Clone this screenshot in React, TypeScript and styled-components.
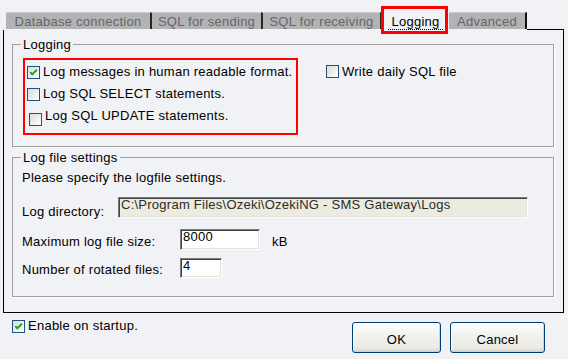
import React from 'react';
import styled, { createGlobalStyle } from 'styled-components';

const GlobalStyle = createGlobalStyle`
  html, body { margin: 0; padding: 0; background: #f1f2f6; }
  * { box-sizing: border-box; }
`;

const Window = styled.div`
  width: 568px;
  height: 359px;
  overflow: hidden;
  background: #f1f2f6;
  padding-top: 12px;
  display: flex;
  flex-direction: column;
  font-family: "Liberation Sans", Arial, sans-serif;
  font-size: 13px;
  line-height: 15px;
  letter-spacing: 0.25px;
  color: #000;
`;

const TabStrip = styled.div`
  display: flex;
  height: 18px;
  margin: 0 4px 0 3px;
  padding-left: 3px;
`;

const Tab = styled.div<{ $w: number; $sep?: boolean; $edge?: boolean; $active?: boolean }>`
  position: relative;
  flex: none;
  width: ${p => p.$w + (p.$sep ? 2 : 0) + (p.$edge ? 2 : 0)}px;
  height: 17px;
  padding-top: 1px;
  background: ${p => (p.$active ? '#f1f2f6' : '#b3b3b6')};
  border-top: 1px solid ${p => (p.$active ? '#f1f2f6' : '#cfcfd1')};
  border-left: ${p => (p.$sep ? '2px solid #262626' : '0')};
  border-right: ${p => (p.$edge ? '2px solid #111' : '0')};
  color: ${p => (p.$active ? '#000' : '#666669')};
  text-align: center;
  white-space: nowrap;
`;

const FocusLabel = styled.span`
  display: inline-block;
  height: 16px;
  padding: 0 3px;
  border-bottom: 1px dotted #000;
`;

const Annotation = styled.div<{ $w: number; $h: number; $x: number; $y: number; $t: number }>`
  position: absolute;
  left: ${p => p.$x}px;
  top: ${p => p.$y}px;
  width: ${p => p.$w}px;
  height: ${p => p.$h}px;
  border: ${p => p.$t}px solid #ff0000;
  pointer-events: none;
  z-index: 2;
`;

const TabFiller = styled.div`
  flex: 1;
  border-bottom: 1px solid #000;
`;

const Panel = styled.div`
  height: 283px;
  margin: 0 4px 0 3px;
  border: 1px solid #000;
  border-top: 0;
  padding: 7px 9px 0 8px;
  display: flex;
  flex-direction: column;
`;

const GroupBox = styled.fieldset<{ $top?: number; $bottom: number }>`
  margin: ${p => p.$top ?? 0}px 0 0 0;
  padding: 0 8px ${p => p.$bottom}px 8px;
  min-width: 0;
  border: 1px solid #a0a0a0;
  box-shadow: 1px 1px 0 #ffffff;
`;

const Legend = styled.legend`
  padding: 0 2px;
  line-height: 15px;
  background: #f1f2f6;
`;

const LoggingContent = styled.div`
  display: flex;
  align-items: flex-start;
  gap: 28px;
  margin: 6px 0 0 2px;
`;

const HighlightBox = styled.div`
  width: 275px;
  height: 77px;
  border: 2px solid #ff0000;
  padding: 4px 0 0 2px;
  display: flex;
  flex-direction: column;
  gap: 7px;
`;

const CheckRow = styled.label<{ $top?: number; $shift?: number }>`
  display: flex;
  align-items: flex-start;
  gap: 3px;
  margin-top: ${p => p.$top ?? 0}px;
  margin-left: ${p => p.$shift ?? 0}px;
  white-space: nowrap;
`;

const Box = styled.span<{ $drop?: number }>`
  flex: none;
  width: 13px;
  height: 13px;
  margin-top: ${p => p.$drop ?? 2}px;
  border: 1px solid #1c5180;
  background: linear-gradient(135deg, #dcdcd5 0%, #f4f4f0 70%, #ffffff 100%);
  display: flex;
`;

const Check: React.FC<{ checked?: boolean; drop?: number }> = ({ checked, drop }) => (
  <Box $drop={drop}>
    {checked && (
      <svg width="11" height="11" viewBox="0 0 11 11">
        <polyline points="2.3,5.2 4.3,7.4 8.8,2.8" fill="none" stroke="#21a121" strokeWidth="2" />
      </svg>
    )}
  </Box>
);

const SettingsContent = styled.div`
  display: flex;
  flex-direction: column;
  padding-left: 1px;
`;

const Intro = styled.div`
  margin-top: 5px;
`;

const FieldRow = styled.div<{ $top: number }>`
  display: flex;
  align-items: flex-start;
  margin-top: ${p => p.$top}px;
`;

const FieldLabel = styled.span<{ $w: number; $drop: number }>`
  flex: none;
  width: ${p => p.$w}px;
  margin-top: ${p => p.$drop}px;
  white-space: nowrap;
`;

const Unit = styled.span`
  margin: 5px 0 0 12px;
`;

const TextBox = styled.input<{ $w: number; $h: number; $readonlyTone?: boolean }>`
  flex: none;
  width: ${p => p.$w}px;
  height: ${p => p.$h}px;
  margin: 0;
  padding: 0 2px ${p => p.$h - 15}px 2px;
  line-height: 13px;
  font-family: "Liberation Sans", Arial, sans-serif;
  font-size: 13px;
  letter-spacing: 0.25px;
  color: ${p => (p.$readonlyTone ? '#2b2b2b' : '#000')};
  background: ${p => (p.$readonlyTone ? '#ecebdf' : '#ffffff')};
  border: 1px solid;
  border-color: #7c7c7c #ffffff #ffffff #7c7c7c;
  box-shadow: inset 1px 1px 0 #404040, inset -1px -1px 0 #e4e2da;
  outline: none;
`;

const Footer = styled.div`
  display: flex;
  justify-content: space-between;
  align-items: flex-start;
  padding: 0 23px 0 12px;
`;

const ButtonRow = styled.div`
  display: flex;
  gap: 9px;
  margin-top: 9px;
`;

const Button = styled.button<{ $w: number }>`
  width: ${p => p.$w}px;
  height: 31px;
  padding: 4px 0 0 0;
  border: 1px solid #003c74;
  border-radius: 3px;
  background: linear-gradient(#ffffff 0%, #f2f2ee 40%, #ebeae4 85%, #d8d4ca 100%);
  box-shadow: inset -1px -1px 0 #d6d0c5, inset 1px 1px 0 #ffffff;
  font-family: "Liberation Sans", Arial, sans-serif;
  font-size: 13px;
  letter-spacing: 0.25px;
  color: #000;
`;

export default function App() {
  return (
    <Window>
      <GlobalStyle />
      <TabStrip>
        <Tab $w={144}>Database connection</Tab>
        <Tab $w={109} $sep>SQL for sending</Tab>
        <Tab $w={117} $sep>SQL for receiving</Tab>
        <Tab $w={67} $sep $active>
          <FocusLabel>Logging</FocusLabel>
          <Annotation $x={-1} $y={-7} $w={67} $h={28} $t={3} />
        </Tab>
        <Tab $w={76} $edge>Advanced</Tab>
        <TabFiller />
      </TabStrip>
      <Panel>
        <GroupBox $bottom={11}>
          <Legend>Logging</Legend>
          <LoggingContent>
            <HighlightBox>
              <CheckRow>
                <Check checked />
                <span>Log messages in human readable format.</span>
              </CheckRow>
              <CheckRow>
                <Check />
                <span>Log SQL SELECT statements.</span>
              </CheckRow>
              <CheckRow $shift={2}>
                <Check drop={5} />
                <span>Log SQL UPDATE statements.</span>
              </CheckRow>
            </HighlightBox>
            <CheckRow $top={6}>
              <Check drop={1} />
              <span>Write daily SQL file</span>
            </CheckRow>
          </LoggingContent>
        </GroupBox>
        <GroupBox $top={3} $bottom={18}>
          <Legend>Log file settings</Legend>
          <SettingsContent>
            <Intro>Please specify the logfile settings.</Intro>
            <FieldRow $top={12}>
              <FieldLabel $w={96} $drop={7}>Log directory:</FieldLabel>
              <TextBox
                $w={410}
                $h={21}
                $readonlyTone
                readOnly
                defaultValue={"C:\\Program Files\\Ozeki\\OzekiNG - SMS Gateway\\Logs"}
              />
            </FieldRow>
            <FieldRow $top={10}>
              <FieldLabel $w={158} $drop={5}>Maximum log file size:</FieldLabel>
              <TextBox $w={80} $h={21} readOnly defaultValue="8000" />
              <Unit>kB</Unit>
            </FieldRow>
            <FieldRow $top={8}>
              <FieldLabel $w={158} $drop={4}>Number of rotated files:</FieldLabel>
              <TextBox $w={42} $h={20} readOnly defaultValue="4" />
            </FieldRow>
          </SettingsContent>
        </GroupBox>
      </Panel>
      <Footer>
        <CheckRow $top={5}>
          <Check checked />
          <span>Enable on startup.</span>
        </CheckRow>
        <ButtonRow>
          <Button $w={89}>OK</Button>
          <Button $w={95}>Cancel</Button>
        </ButtonRow>
      </Footer>
    </Window>
  );
}
